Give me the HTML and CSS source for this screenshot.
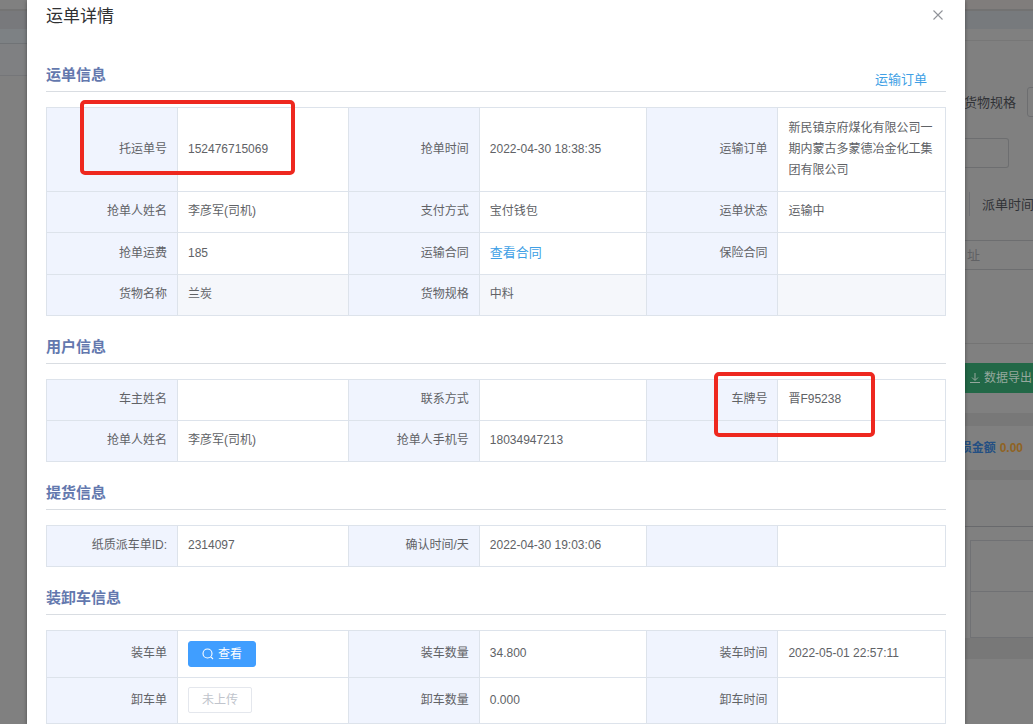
FILE: index.html
```html
<!DOCTYPE html>
<html lang="zh-CN">
<head>
<meta charset="utf-8">
<title>运单详情</title>
<link rel="stylesheet" href="styles.css">
</head>
<body>
<div class="screen">
  <aside class="side">
    <div class="side-top"></div>
    <div class="side-tabs"></div>
    <div class="side-head"></div>
    <div class="side-row"></div>
  </aside>

  <main class="dialog" role="dialog" aria-labelledby="dialog-title">
    <header class="dialog-header">
      <h1 id="dialog-title">运单详情</h1>
      <button class="close" type="button" aria-label="关闭">
        <svg width="12" height="12" viewBox="0 0 12 12"><path d="M1.500 1.500 10.500 10.500M10.500 1.500 1.500 10.500" fill="none" stroke="#909399" stroke-width="1.1"/></svg>
      </button>
    </header>

    <section>
      <div class="section-head"><h2>运单信息</h2><a class="link order-link" href="#order">运输订单</a></div>
      <div class="table-wrap">
        <table>
          <colgroup><col class="label"><col class="value first"><col class="label"><col class="value"><col class="label"><col class="value"></colgroup>
          <tr class="tall"><th>托运单号</th><td>152476715069</td><th>抢单时间</th><td>2022-04-30 18:38:35</td><th>运输订单</th><td>新民镇京府煤化有限公司一期内蒙古多蒙德冶金化工集团有限公司</td></tr>
          <tr><th>抢单人姓名</th><td>李彦军(司机)</td><th>支付方式</th><td>宝付钱包</td><th>运单状态</th><td>运输中</td></tr>
          <tr class="medium"><th>抢单运费</th><td>185</td><th>运输合同</th><td><a class="link" href="#contract">查看合同</a></td><th>保险合同</th><td></td></tr>
          <tr class="hover"><th>货物名称</th><td>兰炭</td><th>货物规格</th><td>中料</td><th></th><td></td></tr>
        </table>
        <div class="mark mark-number"></div>
      </div>
    </section>

    <section>
      <div class="section-head"><h2>用户信息</h2></div>
      <div class="table-wrap">
        <table>
          <colgroup><col class="label"><col class="value first"><col class="label"><col class="value"><col class="label"><col class="value"></colgroup>
          <tr><th>车主姓名</th><td></td><th>联系方式</th><td></td><th>车牌号</th><td>晋F95238</td></tr>
          <tr><th>抢单人姓名</th><td>李彦军(司机)</td><th>抢单人手机号</th><td>18034947213</td><th></th><td></td></tr>
        </table>
        <div class="mark mark-plate"></div>
      </div>
    </section>

    <section>
      <div class="section-head"><h2>提货信息</h2></div>
      <table>
        <colgroup><col class="label"><col class="value first"><col class="label"><col class="value"><col class="label"><col class="value"></colgroup>
        <tr><th>纸质派车单ID:</th><td>2314097</td><th>确认时间/天</th><td>2022-04-30 19:03:06</td><th></th><td></td></tr>
      </table>
    </section>

    <section>
      <div class="section-head"><h2>装卸车信息</h2></div>
      <table>
        <colgroup><col class="label"><col class="value first"><col class="label"><col class="value"><col class="label"><col class="value"></colgroup>
        <tr class="load"><th>装车单</th><td><button class="btn primary" type="button"><svg width="12" height="12" viewBox="0 0 12 12"><path d="M5.500 1a4.500 4.500 0 1 0 0 9 4.500 4.500 0 0 0 0-9ZM8.700 8.700 11 11" fill="none" stroke="currentColor" stroke-width="1.1"/></svg>查看</button></td><th>装车数量</th><td>34.800</td><th>装车时间</th><td>2022-05-01 22:57:11</td></tr>
        <tr class="unload"><th>卸车单</th><td><button class="btn plain" type="button" disabled>未上传</button></td><th>卸车数量</th><td>0.000</td><th>卸车时间</th><td></td></tr>
      </table>
    </section>
  </main>

  <aside class="page">
    <div class="page-top"></div>
    <div class="page-tabs"></div>
    <div class="page-gap"></div>
    <form class="filters">
      <div class="filter-row spec"><label for="spec">货物规格</label><input id="spec" type="text"></div>
      <div class="filter-row"><input class="box" type="text" aria-label="筛选"></div>
      <div class="filter-row date"><span class="bar"></span><span>派单时间</span></div>
      <input class="address" type="text" placeholder="址" aria-label="地址">
    </form>
    <div class="toolbar"><button class="export" type="button"><svg width="10" height="11" viewBox="0 0 10 11"><path d="M5 0v7M2 4.500l3 3 3-3M0 9.500h10" fill="none" stroke="currentColor"/></svg>数据导出</button></div>
    <div class="summary"><span>损金额</span><b>0.00</b></div>
    <div class="panel"></div>
    <div class="grid"><div class="grid-row"></div><div class="grid-row last"></div></div>
    <div class="footer"></div>
  </aside>
</div>
</body>
</html>
```
FILE: styles.css
```css
* { box-sizing: border-box; }
body {
  margin: 0;
  background: #808080;
  color: #606266;
  font: 12px/21px "Liberation Sans", "Noto Sans CJK SC", sans-serif;
}
h1, h2 { margin: 0; }
button, input { font: inherit; }
.screen {
  display: grid;
  grid-template-columns: 27px minmax(0, 1fr) 68px;
  height: 100vh;
  overflow: hidden;
}

/* Dialog */
.dialog {
  background: #fff;
  padding: 0 19px;
  box-shadow: 0 1px 4px rgba(0, 0, 0, .4);
  z-index: 1;
}
.dialog-header {
  display: flex;
  justify-content: space-between;
  align-items: flex-start;
  height: 44px;
  padding-top: 4px;
}
h1 { font-size: 17px; line-height: 26px; font-weight: 400; color: #303133; }
.close { display: flex; padding: 5px 2px; border: 0; background: none; cursor: pointer; }
.section-head {
  display: flex;
  justify-content: space-between;
  align-items: flex-end;
  height: 48px;
  padding-bottom: 7px;
  margin-bottom: 15px;
  border-bottom: 1px solid #d9dde2;
}
h2 { font-size: 15px; line-height: 18px; font-weight: 700; color: #6378ae; }
.link { color: #409fe5; font-size: 13px; text-decoration: none; }
.order-link { line-height: 18px; margin: 0 19px -5px 0; }

table { width: 100%; table-layout: fixed; border-collapse: collapse; }
col.label { width: 131px; }
col.first { width: 19%; }
tr { height: 41px; }
tr.medium { height: 42px; }
tr.tall { height: 84px; }
tr.load { height: 47px; }
tr.unload { height: 46px; }
th, td { padding: 0 10px 1px; border: 1px solid #dde3eb; vertical-align: middle; }
th { background: #f0f4fe; font-weight: 400; text-align: right; }
td { text-align: left; }
.hover td { background: #f5f7fb; }

.btn {
  display: flex;
  align-items: center;
  justify-content: center;
  gap: 4px;
  height: 26px;
  padding: 0 10px;
  border: 1px solid #e4e7ed;
  border-radius: 3px;
  font-size: 12px;
  line-height: 18px;
  white-space: nowrap;
}
.btn svg { flex: none; }
.primary { width: 68px; background: #409eff; border-color: #409eff; color: #fff; }
.plain { width: 64px; background: #fff; color: #c0c4cc; border-radius: 2px; }

.table-wrap { position: relative; }
.mark { position: absolute; top: -7px; border: 4px solid #ee281f; border-radius: 5px; pointer-events: none; }
.mark-number { left: 34px; width: 215px; height: 75px; }
.mark-plate { right: 71px; width: 161px; height: 65px; }

/* Dimmed page, left edge */
.side-top { height: 11px; border-bottom: 2px solid #747474; }
.side-tabs { height: 18px; background: #78797c; }
.side-head { height: 15px; background: #7d8184; border-bottom: 1px solid #707376; }
.side-row { height: 32px; background: #7f8082; border-bottom: 1px solid #757679; }

/* Dimmed page, right edge */
.page { overflow: hidden; color: #303236; font-size: 13px; }
.page-top { height: 11px; border-bottom: 2px solid #727272; background: #807d7c; }
.page-tabs { height: 18px; background: #777a7d; }
.page-gap { height: 12px; border-bottom: 1px solid #777; }
.filters { height: 303px; padding-top: 46px; border-bottom: 1px solid #747474; }
.filter-row { display: flex; align-items: center; height: 30px; margin-bottom: 21px; }
.spec { justify-content: flex-end; gap: 11px; white-space: nowrap; }
.spec label { flex: none; }
.spec input { flex: none; width: 30px; height: 30px; margin-right: -24px; }
.page input { background: #808080; border: 1px solid #6d6e70; border-radius: 3px; }
.page .box { width: 44px; height: 30px; border-left: 0; border-radius: 0 3px 3px 0; }
.date { gap: 12px; padding-left: 4px; white-space: nowrap; }
.bar { flex: none; width: 1px; height: 24px; background: #707175; }
.page .address { display: block; width: 100%; height: 30px; padding: 0 2px; border-width: 1px 0; border-radius: 0; }
.address::placeholder { color: #606164; opacity: 1; }
.toolbar { height: 69px; padding-top: 19px; }
.export {
  display: flex;
  align-items: center;
  gap: 4px;
  width: 100%;
  height: 30px;
  padding: 0 0 0 5px;
  border: 0;
  background: #226847;
  color: #96a89e;
  font-size: 12px;
  white-space: nowrap;
}
.export svg { flex: none; }
.summary {
  display: flex;
  align-items: center;
  justify-content: flex-end;
  gap: 4px;
  height: 57px;
  padding-right: 10px;
  border-top: 13px solid #787878;
  color: #234f83;
  font-size: 12px;
  font-weight: 700;
  white-space: nowrap;
}
.summary b { color: #906323; }
.panel { height: 57px; border-top: 10px solid #787878; border-bottom: 1px solid #68696c; }
.grid { margin: 13px 0 0 5px; border: 1px solid #707174; border-right: 0; }
.grid-row { height: 51px; border-bottom: 1px solid #707174; }
.grid-row.last { height: 45px; border-bottom: 0; }
.footer { height: 21px; background: #787878; }
```
